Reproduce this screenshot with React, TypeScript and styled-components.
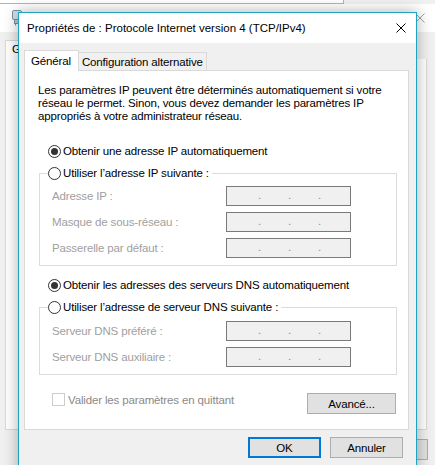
import styled, { createGlobalStyle } from "styled-components";

const GlobalStyle = createGlobalStyle`
  html, body {
    margin: 0;
    padding: 0;
    background: #f0f0f0;
  }
  body {
    font-family: "Liberation Sans", Arial, sans-serif;
    font-size: 11.5px;
    letter-spacing: -0.15px;
    color: #000;
  }
  * {
    box-sizing: border-box;
  }
`;

const Desk = styled.div`
  position: relative;
  width: 435px;
  height: 465px;
  overflow: hidden;
  background: #f0f0f0;
`;

/* --- windows behind the dialog --- */

const StatusWindow = styled.div`
  position: absolute;
  z-index: 2;
  left: -20px;
  top: -26px;
  width: 364px;
  height: 30px;
  background: #fff;
  border: 1px solid #b4b4b4;
  display: flex;
  align-items: flex-end;
  padding: 0 8px 1px 32px;
  color: #6d6d6d;
`;

const FaintClose = styled.span`
  margin-left: auto;
  margin-bottom: 2px;
  display: flex;
`;

const EthernetWindow = styled.div`
  position: absolute;
  z-index: 1;
  left: -10px;
  top: 4px;
  width: 453px;
  height: 480px;
  background: #f0f0f0;
  display: flex;
  flex-direction: column;
`;

const EthernetTitle = styled.div`
  height: 28px;
  background: #fff;
  display: flex;
  align-items: center;
  justify-content: space-between;
  padding: 0 18px 0 21px;
`;

const EthernetBody = styled.div`
  display: flex;
  flex-direction: column;
  padding: 8px 16px 0 15px;
`;

const EthernetTab = styled.div`
  align-self: flex-start;
  height: 19px;
  padding: 2px 6px 0 6px;
  background: #fff;
  border: 1px solid #d9d9d9;
  border-bottom: none;
  white-space: nowrap;
`;

const EthernetPanel = styled.div`
  height: 371px;
  background: #fff;
  border: 1px solid #d9d9d9;
  border-top: none;
`;

const EthernetFooter = styled.div`
  display: flex;
  justify-content: flex-end;
  padding: 9px 15px 0 0;
`;

/* --- the TCP/IPv4 dialog --- */

const Dialog = styled.div`
  position: absolute;
  z-index: 3;
  left: 18px;
  top: 12px;
  width: 399px;
  height: 470px;
  border: 1px solid #1ba6bf;
  background: #f0f0f0;
  box-shadow: 0 0 14px rgba(0, 0, 0, 0.32);
  display: flex;
  flex-direction: column;
`;

const TitleBar = styled.div`
  height: 30px;
  flex: none;
  background: #fff;
  display: flex;
  align-items: center;
  padding: 0 10px 0 8px;
  letter-spacing: 0;
`;

const TitleText = styled.span`
  flex: 1;
`;

const DialogBody = styled.div`
  display: flex;
  flex-direction: column;
  padding: 7px 7px 0 5px;
`;

const TabRow = styled.div`
  display: flex;
  align-items: flex-end;
`;

const Tab = styled.div<{ $active?: boolean }>`
  position: relative;
  z-index: ${(p) => (p.$active ? 1 : 0)};
  height: ${(p) => (p.$active ? "21px" : "18px")};
  margin-bottom: ${(p) => (p.$active ? "-1px" : "0")};
  margin-left: ${(p) => (p.$active ? "0" : "-1px")};
  padding: 0 ${(p) => (p.$active ? "7px 0 6px" : "3px")};
  display: flex;
  align-items: center;
  background: ${(p) => (p.$active ? "#fff" : "#f0f0f0")};
  border: 1px solid #d9d9d9;
  border-bottom: none;
  white-space: nowrap;
`;

const Panel = styled.div`
  background: #fff;
  border: 1px solid #d9d9d9;
  padding: 13px 10px 15px 13px;
  display: flex;
  flex-direction: column;
`;

const Intro = styled.p`
  margin: 0;
  line-height: 13px;
`;

const RadioRow = styled.label<{ $gap?: number }>`
  display: flex;
  align-items: center;
  height: 16px;
  margin-top: ${(p) => p.$gap ?? 0}px;
  padding-left: 10px;
  gap: 2px;
  white-space: nowrap;
`;

const Radio = styled.span<{ $checked?: boolean }>`
  width: 13px;
  height: 13px;
  flex: none;
  border-radius: 50%;
  border: 1px solid #333;
  background: #fff;
  display: flex;
  align-items: center;
  justify-content: center;
  &::after {
    content: "";
    width: 7px;
    height: 7px;
    border-radius: 50%;
    background: ${(p) => (p.$checked ? "#333" : "transparent")};
  }
`;

const GroupBox = styled.fieldset<{ $gap: number; $top: number }>`
  margin: ${(p) => p.$gap}px 0 0 1px;
  width: 358px;
  min-width: 0;
  border: 1px solid #dcdcdc;
  padding: ${(p) => p.$top}px 0 7px 12px;
`;

const GroupLegend = styled.legend`
  margin-left: -4px;
  padding: 0 3px 0 0;
  height: 16px;
  display: flex;
  align-items: center;
  gap: 2px;
  white-space: nowrap;
`;

const FieldGrid = styled.div`
  display: grid;
  grid-template-columns: 174px 125px;
  row-gap: 6px;
  align-items: center;
`;

const FieldLabel = styled.span`
  color: #a0a0a0;
  white-space: nowrap;
`;

const IpField = styled.div`
  height: 20px;
  border: 1px solid #7a7a7a;
  background: #f0f0f0;
  display: grid;
  grid-template-columns: repeat(3, 30px);
  padding-left: 4px;
  line-height: 17px;
  color: #8c8c8c;
`;

const IpDot = styled.span`
  text-align: right;
`;

const PanelFooter = styled.div`
  margin-top: 18px;
  padding-right: 2px;
  display: flex;
  justify-content: space-between;
  align-items: flex-start;
`;

const CheckRow = styled.label`
  display: flex;
  align-items: center;
  gap: 3px;
  margin-left: 14px;
  height: 13px;
  color: #8a8a8a;
  white-space: nowrap;
`;

const CheckBox = styled.span`
  width: 13px;
  height: 13px;
  flex: none;
  border: 1px solid #cccccc;
  background: #fff;
`;

const Button = styled.button<{ $width: number; $default?: boolean }>`
  width: ${(p) => p.$width}px;
  height: 21px;
  padding: 0;
  font: inherit;
  letter-spacing: inherit;
  color: #000;
  background: #e1e1e1;
  border: ${(p) => (p.$default ? "2px solid #0078d7" : "1px solid #adadad")};
`;

const ButtonRow = styled.div`
  display: flex;
  justify-content: flex-end;
  gap: 9px;
  padding: 7px 6px 0 0;
`;

const CloseGlyph = ({ color = "#000" }: { color?: string }) => (
  <svg width="10" height="10" viewBox="0 0 10 10">
    <path d="M0.5 0.5L9.5 9.5M9.5 0.5L0.5 9.5" stroke={color} strokeWidth="1" fill="none" />
  </svg>
);

const NetworkIcon = () => (
  <svg width="16" height="16" viewBox="0 0 16 16">
    <rect x="1.5" y="0.5" width="9" height="9" rx="1.5" fill="#d5e0e8" stroke="#7d8f9c" />
    <rect x="3.5" y="9.5" width="5" height="4" fill="#b9c7d2" stroke="#7d8f9c" />
    <path d="M4.5 13.5v2M7.5 13.5v2" stroke="#7d8f9c" />
  </svg>
);

const IpInput = () => (
  <IpField>
    <IpDot>.</IpDot>
    <IpDot>.</IpDot>
    <IpDot>.</IpDot>
  </IpField>
);

export default function App() {
  return (
    <>
      <GlobalStyle />
      <Desk>
        <EthernetWindow>
          <EthernetTitle>
            <NetworkIcon />
            <CloseGlyph color="#a0a0a0" />
          </EthernetTitle>
          <EthernetBody>
            <EthernetTab>Gestion de réseau</EthernetTab>
            <EthernetPanel />
          </EthernetBody>
          <EthernetFooter>
            <Button $width={75} aria-label="Annuler" />
          </EthernetFooter>
        </EthernetWindow>

        <StatusWindow>
          <span>État de Ethernet</span>
          <FaintClose>
            <CloseGlyph color="#a0a0a0" />
          </FaintClose>
        </StatusWindow>

        <Dialog>
          <TitleBar>
            <TitleText>Propriétés de : Protocole Internet version 4 (TCP/IPv4)</TitleText>
            <CloseGlyph />
          </TitleBar>
          <DialogBody>
            <TabRow>
              <Tab $active>Général</Tab>
              <Tab>Configuration alternative</Tab>
            </TabRow>
            <Panel>
              <Intro>
                Les paramètres IP peuvent être déterminés automatiquement si votre
                <br />
                réseau le permet. Sinon, vous devez demander les paramètres IP
                <br />
                appropriés à votre administrateur réseau.
              </Intro>

              <RadioRow $gap={20}>
                <Radio $checked />
                Obtenir une adresse IP automatiquement
              </RadioRow>

              <GroupBox $gap={6} $top={5}>
                <GroupLegend>
                  <Radio />
                  Utiliser l’adresse IP suivante :
                </GroupLegend>
                <FieldGrid>
                  <FieldLabel>Adresse IP :</FieldLabel>
                  <IpInput />
                  <FieldLabel>Masque de sous-réseau :</FieldLabel>
                  <IpInput />
                  <FieldLabel>Passerelle par défaut :</FieldLabel>
                  <IpInput />
                </FieldGrid>
              </GroupBox>

              <RadioRow $gap={11}>
                <Radio $checked />
                Obtenir les adresses des serveurs DNS automatiquement
              </RadioRow>

              <GroupBox $gap={6} $top={6}>
                <GroupLegend>
                  <Radio />
                  Utiliser l’adresse de serveur DNS suivante :
                </GroupLegend>
                <FieldGrid>
                  <FieldLabel>Serveur DNS préféré :</FieldLabel>
                  <IpInput />
                  <FieldLabel>Serveur DNS auxiliaire :</FieldLabel>
                  <IpInput />
                </FieldGrid>
              </GroupBox>

              <PanelFooter>
                <CheckRow>
                  <CheckBox />
                  Valider les paramètres en quittant
                </CheckRow>
                <Button $width={89}>Avancé...</Button>
              </PanelFooter>
            </Panel>
            <ButtonRow>
              <Button $width={73} $default>
                OK
              </Button>
              <Button $width={73}>Annuler</Button>
            </ButtonRow>
          </DialogBody>
        </Dialog>
      </Desk>
    </>
  );
}
